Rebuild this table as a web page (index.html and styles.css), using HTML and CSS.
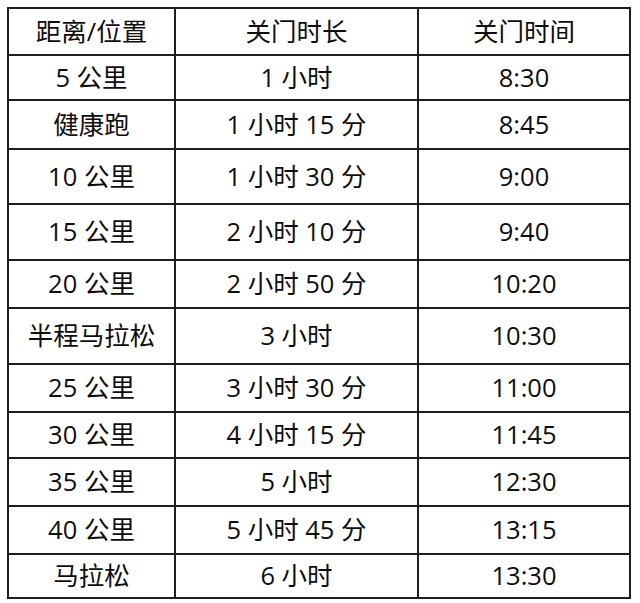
FILE: index.html
```html
<!DOCTYPE html>
<html lang="zh-CN">
<head>
<meta charset="utf-8">
<title>关门时间</title>
<link rel="stylesheet" href="styles.css">
</head>
<body>
<table class="cutoff">
  <colgroup>
    <col class="c1">
    <col class="c2">
    <col class="c3">
  </colgroup>
  <thead>
    <tr><th>距离/位置</th><th>关门时长</th><th>关门时间</th></tr>
  </thead>
  <tbody>
    <tr><td>5 公里</td><td>1 小时</td><td>8:30</td></tr>
    <tr><td>健康跑</td><td>1 小时 15 分</td><td>8:45</td></tr>
    <tr><td>10 公里</td><td>1 小时 30 分</td><td>9:00</td></tr>
    <tr><td>15 公里</td><td>2 小时 10 分</td><td>9:40</td></tr>
    <tr><td>20 公里</td><td>2 小时 50 分</td><td>10:20</td></tr>
    <tr><td>半程马拉松</td><td>3 小时</td><td>10:30</td></tr>
    <tr><td>25 公里</td><td>3 小时 30 分</td><td>11:00</td></tr>
    <tr><td>30 公里</td><td>4 小时 15 分</td><td>11:45</td></tr>
    <tr><td>35 公里</td><td>5 小时</td><td>12:30</td></tr>
    <tr><td>40 公里</td><td>5 小时 45 分</td><td>13:15</td></tr>
    <tr><td>马拉松</td><td>6 小时</td><td>13:30</td></tr>
  </tbody>
</table>
</body>
</html>
```
FILE: styles.css
```css
html, body {
  margin: 0;
  padding: 0;
  background: #ffffff;
}
body {
  padding: 7px 0 0 7px;
  font-family: "Open Sans", "Noto Sans CJK SC", sans-serif;
  color: #0d0d0d;
}
.cutoff {
  border-collapse: collapse;
  table-layout: fixed;
  width: 622px;
}
.c1 { width: 167px; }
.c2 { width: 243px; }
.c3 { width: 212px; }
.cutoff th,
.cutoff td {
  border: 2px solid #1e1e1e;
  padding: 0;
  text-align: center;
  vertical-align: middle;
  font-size: 25.5px;
  font-weight: normal;
  line-height: 1;
  white-space: nowrap;
}
.cutoff thead tr { height: 47px; }
.cutoff tbody tr:nth-child(1) { height: 45px; }
.cutoff tbody tr:nth-child(2) { height: 49px; }
.cutoff tbody tr:nth-child(3) { height: 55px; }
.cutoff tbody tr:nth-child(4) { height: 56px; }
.cutoff tbody tr:nth-child(5) { height: 48px; }
.cutoff tbody tr:nth-child(6) { height: 56px; }
.cutoff tbody tr:nth-child(7) { height: 48px; }
.cutoff tbody tr:nth-child(8) { height: 46px; }
.cutoff tbody tr:nth-child(9) { height: 48px; }
.cutoff tbody tr:nth-child(10) { height: 48px; }
.cutoff tbody tr:nth-child(11) { height: 44px; }
```
